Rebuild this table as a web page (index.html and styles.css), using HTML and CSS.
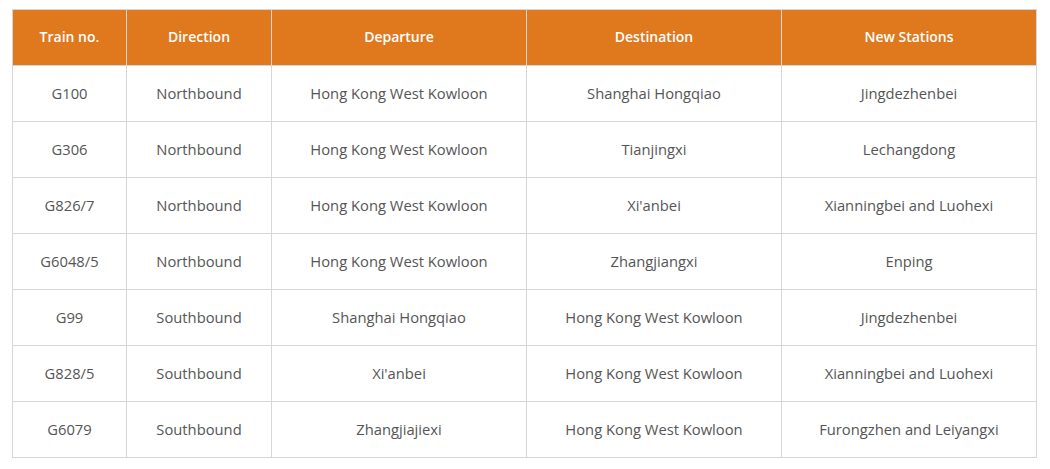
FILE: index.html
```html
<!DOCTYPE html>
<html>
<head>
<meta charset="utf-8">
<link rel="stylesheet" href="styles.css">
</head>
<body>
<table class="trains">
<colgroup>
<col class="c1"><col class="c2"><col class="c3"><col class="c4"><col class="c5">
</colgroup>
<thead>
<tr><th>Train no.</th><th>Direction</th><th>Departure</th><th>Destination</th><th>New Stations</th></tr>
</thead>
<tbody>
<tr><td>G100</td><td>Northbound</td><td>Hong Kong West Kowloon</td><td>Shanghai Hongqiao</td><td>Jingdezhenbei</td></tr>
<tr><td>G306</td><td>Northbound</td><td>Hong Kong West Kowloon</td><td>Tianjingxi</td><td>Lechangdong</td></tr>
<tr><td>G826/7</td><td>Northbound</td><td>Hong Kong West Kowloon</td><td>Xi'anbei</td><td>Xianningbei and Luohexi</td></tr>
<tr><td>G6048/5</td><td>Northbound</td><td>Hong Kong West Kowloon</td><td>Zhangjiangxi</td><td>Enping</td></tr>
<tr><td>G99</td><td>Southbound</td><td>Shanghai Hongqiao</td><td>Hong Kong West Kowloon</td><td>Jingdezhenbei</td></tr>
<tr><td>G828/5</td><td>Southbound</td><td>Xi'anbei</td><td>Hong Kong West Kowloon</td><td>Xianningbei and Luohexi</td></tr>
<tr><td>G6079</td><td>Southbound</td><td>Zhangjiajiexi</td><td>Hong Kong West Kowloon</td><td>Furongzhen and Leiyangxi</td></tr>
</tbody>
</table>
</body>
</html>
```
FILE: styles.css
```css
html, body { margin: 0; padding: 0; background: #fff; }
body { padding: 9px 0 0 12px; font-family: "Open Sans", "Noto Sans", sans-serif; }
.trains {
  border-collapse: collapse;
  table-layout: fixed;
  width: 1024px;
}
.c1 { width: 114px; }
.c2 { width: 145px; }
.c3 { width: 255px; }
.c4 { width: 255px; }
.c5 { width: 255px; }
.trains th, .trains td {
  border: 1px solid #d6d6d6;
  text-align: center;
  padding: 0 0 2px 0;
  height: 53px;
}
.trains th {
  background: #e0781e;
  color: #fff;
  font-weight: 600;
  font-size: 14px;
}
.trains td {
  color: #555;
  font-size: 14.75px;
}
```
